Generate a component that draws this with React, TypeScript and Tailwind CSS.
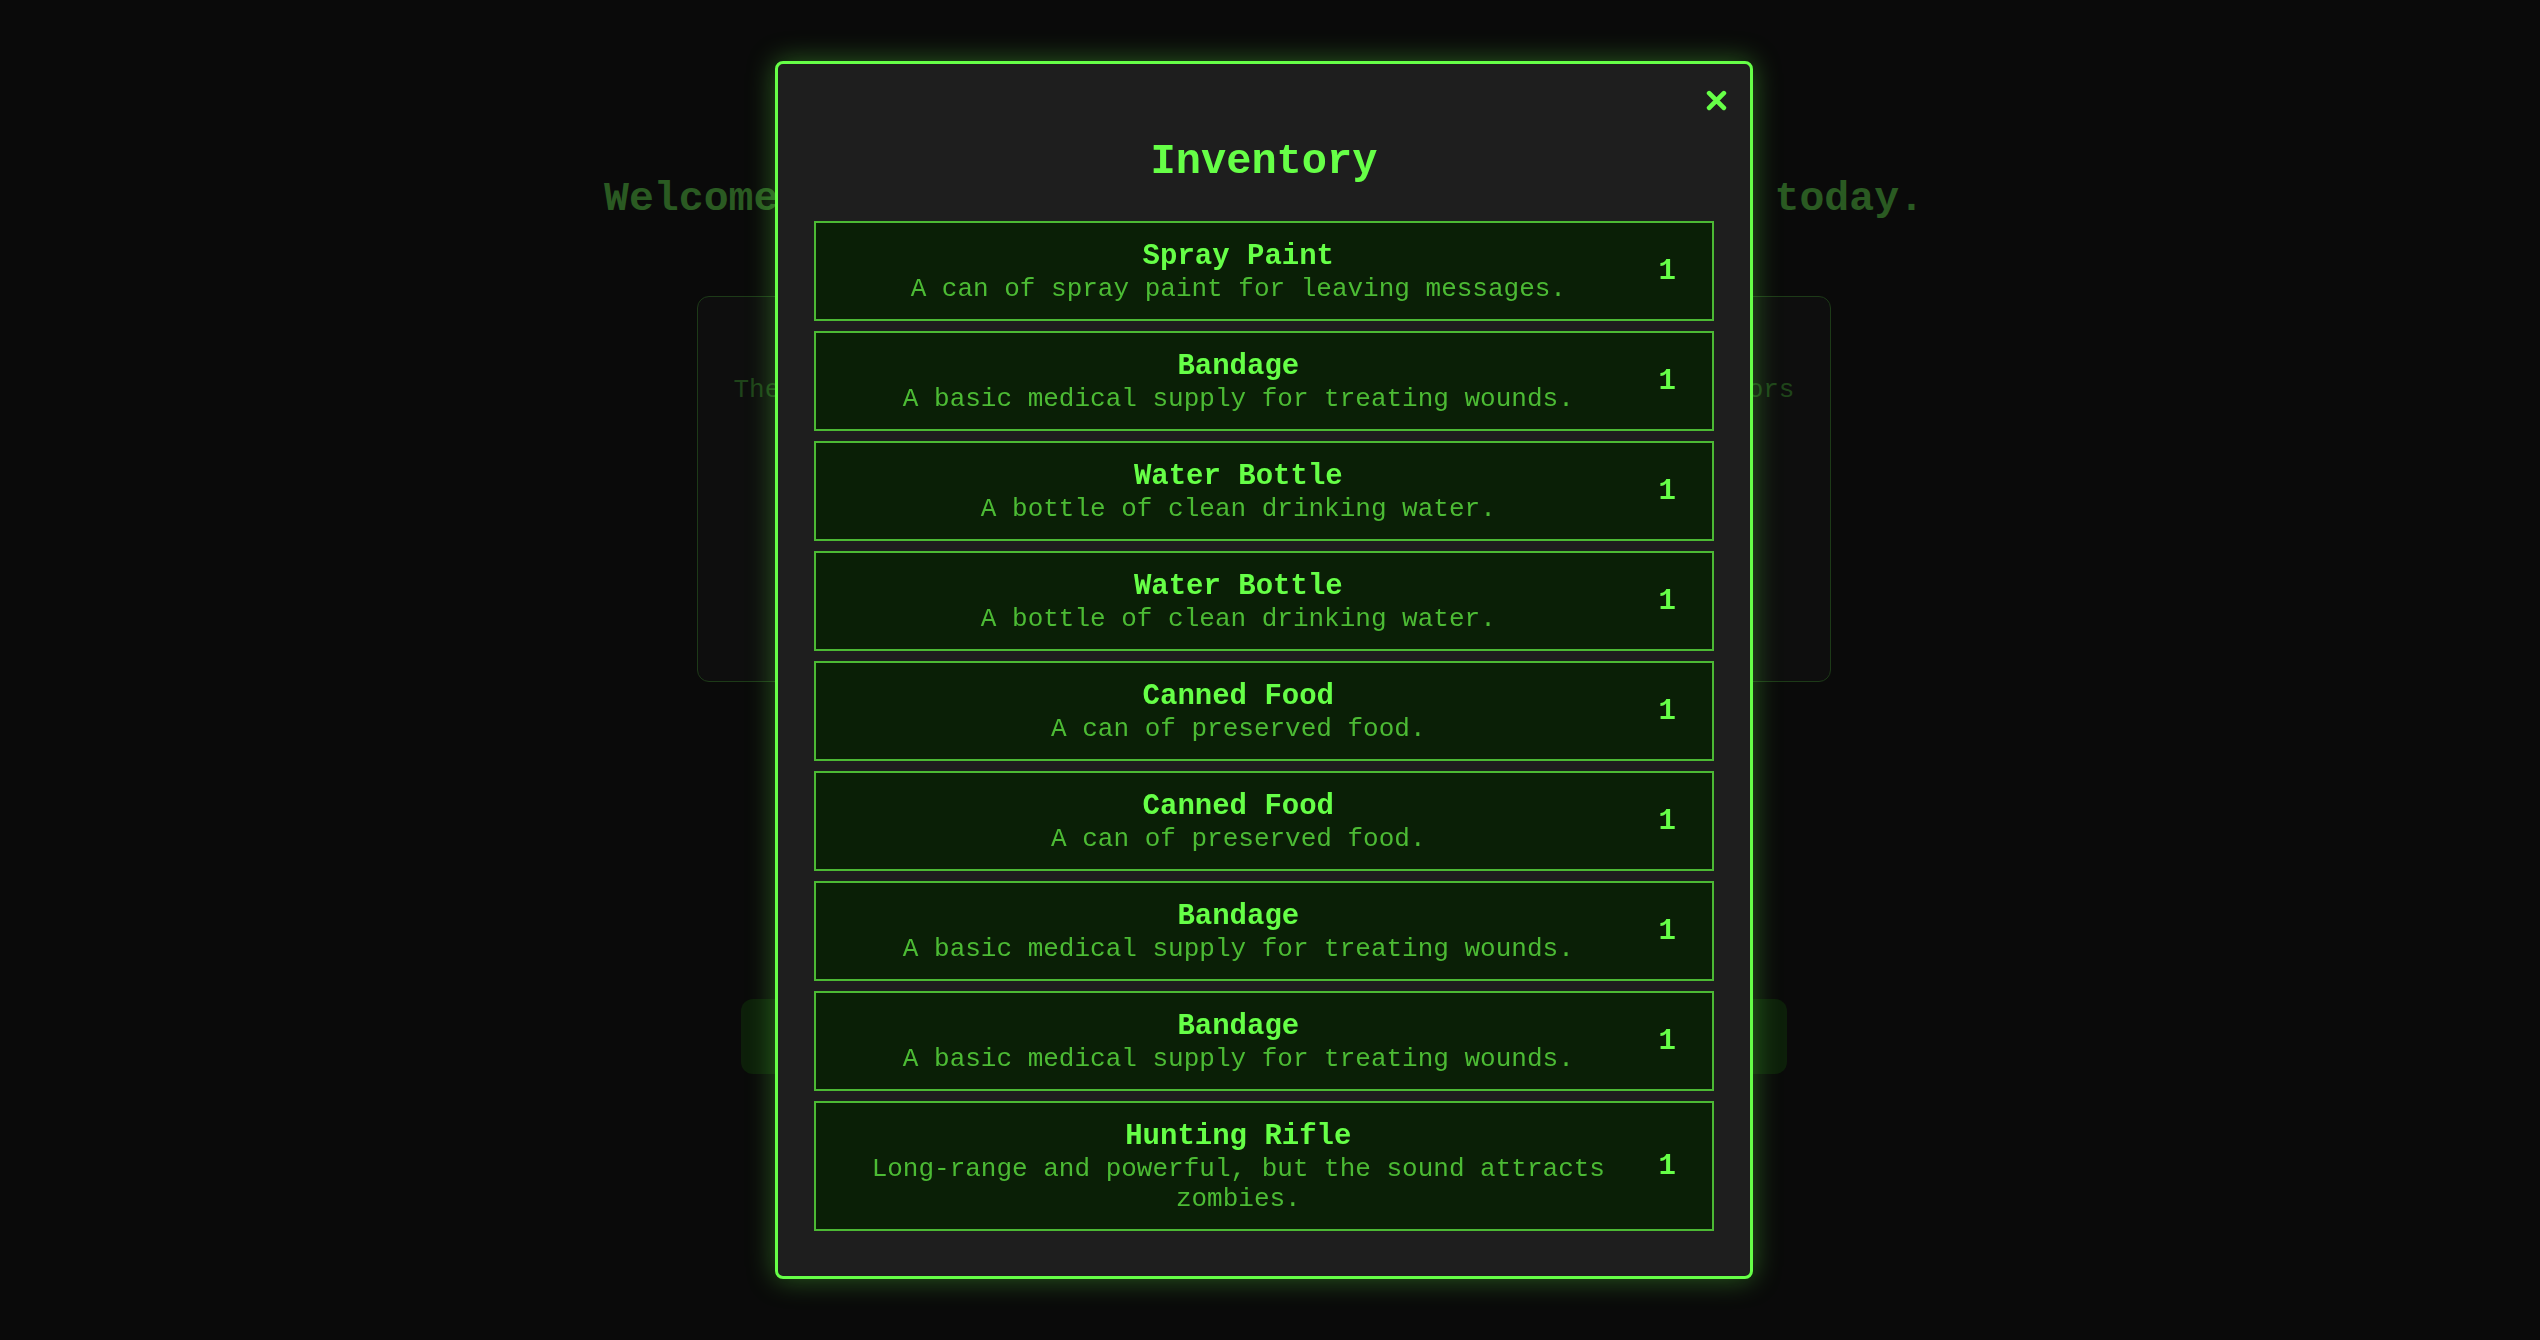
import React from 'react';

interface InventoryItem {
  id: number;
  name: string;
  description: string;
  quantity: number;
}

const items: InventoryItem[] = [
  { id: 1, name: 'Spray Paint', description: 'A can of spray paint for leaving messages.', quantity: 1 },
  { id: 2, name: 'Bandage', description: 'A basic medical supply for treating wounds.', quantity: 1 },
  { id: 3, name: 'Water Bottle', description: 'A bottle of clean drinking water.', quantity: 1 },
  { id: 4, name: 'Water Bottle', description: 'A bottle of clean drinking water.', quantity: 1 },
  { id: 5, name: 'Canned Food', description: 'A can of preserved food.', quantity: 1 },
  { id: 6, name: 'Canned Food', description: 'A can of preserved food.', quantity: 1 },
  { id: 7, name: 'Bandage', description: 'A basic medical supply for treating wounds.', quantity: 1 },
  { id: 8, name: 'Bandage', description: 'A basic medical supply for treating wounds.', quantity: 1 },
  { id: 9, name: 'Hunting Rifle', description: 'Long-range and powerful, but the sound attracts zombies.', quantity: 1 },
];

const InventoryRow: React.FC<{ item: InventoryItem }> = ({ item }) => (
  <div className="flex items-center border-2 border-[#4cb934] bg-[#0a1f06] px-[36px] pb-[15px] pt-[17px]">
    <div className="flex-1 text-center">
      <p className="text-[29px] font-bold leading-[34px] text-[#66ff47]">{item.name}</p>
      <p className="text-[26px] leading-[30px] text-[#4cbb34]">{item.description}</p>
    </div>
    <span className="ml-[34px] text-[29px] font-bold leading-[34px] text-[#66ff47]">{item.quantity}</span>
  </div>
);

export default function App() {
  return (
    <div className="relative min-h-[1340px] bg-[#0a0a0a] font-['Courier_New','Nimbus_Mono_PS','FreeMono','Liberation_Mono',monospace]">
      {/* dashboard behind the modal */}
      <div className="flex flex-col items-center pr-[12px] pt-[175px]">
        <h1 className="text-[41.5px] font-bold leading-[47px] text-[#2a5a22]">Welcome back, survivor. The dead seem restless today.</h1>
        <div className="mt-[74px] h-[386px] w-[1134px] rounded-xl border border-[#1d3a18] bg-[#0e0e0e] px-[32px] pt-[78px]">
          <p className="text-center text-[26px] leading-[30px] text-[#1f441a]">
            The world has ended. You are one of the last few remaining survivors of the outbreak. Scavenge, survive, and make it through.
          </p>
        </div>
        <button className="mt-[317px] h-[75px] w-[1046px] rounded-xl bg-[#0d1f0a] text-[26px] font-bold text-[#0a140a]">
          Scavenge for Supplies to Last
        </button>
      </div>

      {/* inventory modal */}
      <div className="fixed inset-0 flex items-center justify-center pr-[12px]">
        <div className="relative w-[978px] rounded-lg border-[3px] border-[#66ff47] bg-[#1e1e1e] px-[36px] pb-[45px] pt-[74px] shadow-[0_0_28px_rgba(102,255,71,0.35)]">
          <button className="absolute right-[23px] top-[26px]">
            <svg width="21" height="21" viewBox="0 0 20 20">
              <path d="M3 3L17 17M17 3L3 17" stroke="#66ff47" strokeWidth="4.5" strokeLinecap="round" />
            </svg>
          </button>
          <h2 className="mb-[35px] text-center text-[42px] font-bold leading-[48px] text-[#66ff47]">Inventory</h2>
          <div className="flex flex-col gap-[10px]">
            {items.map(item => (
              <InventoryRow key={item.id} item={item} />
            ))}
          </div>
        </div>
      </div>
    </div>
  );
}
